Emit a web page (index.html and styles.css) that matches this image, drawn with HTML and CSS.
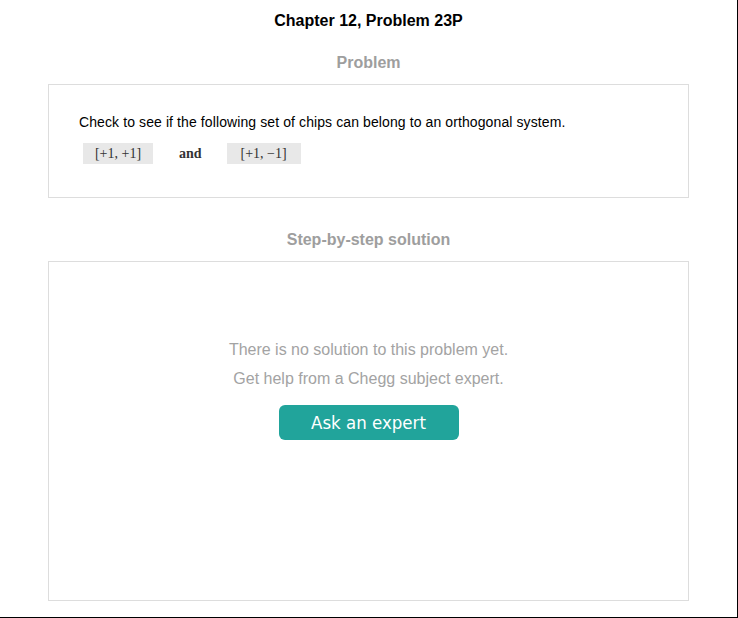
FILE: index.html
```html
<!DOCTYPE html>
<html>
<head>
<meta charset="utf-8">
<link rel="stylesheet" href="styles.css">
</head>
<body>
<div class="page">
  <div class="content">
    <h1 class="title">Chapter 12, Problem 23P</h1>
    <h2 class="section-title">Problem</h2>
    <div class="card problem-card">
      <p class="problem-text">Check to see if the following set of chips can belong to an orthogonal system.</p>
      <div class="chips">
        <span class="chip chip-a">[+1, +1]</span>
        <span class="chip-and">and</span>
        <span class="chip chip-b">[+1, &minus;1]</span>
      </div>
    </div>
    <h2 class="section-title section-gap">Step-by-step solution</h2>
    <div class="card solution-card">
      <p class="empty-text">There is no solution to this problem yet.</p>
      <p class="empty-text">Get help from a Chegg subject expert.</p>
      <button class="ask-btn">Ask an expert</button>
    </div>
  </div>
</div>
</body>
</html>
```
FILE: styles.css
```css
* { box-sizing: border-box; }
html, body { margin: 0; padding: 0; background: #fff; }
body { font-family: "Liberation Sans", Arial, sans-serif; }

.page {
  width: 738px;
  height: 618px;
  border-right: 1px solid #000;
  border-bottom: 1px solid #000;
  padding-top: 11px;
  padding-left: 48px;
}

.content {
  width: 641px;
}

.title {
  margin: 0;
  font-size: 16px;
  line-height: 20px;
  font-weight: bold;
  text-align: center;
  color: #000;
}

.section-title {
  margin: 22px 0 11px;
  font-size: 16px;
  line-height: 20px;
  font-weight: bold;
  text-align: center;
  color: #9e9e9e;
}

.section-gap { margin-top: 32px; }

.card {
  border: 1px solid #dddddd;
  background: #fff;
}

.problem-card {
  height: 114px;
  padding: 29px 30px 0;
}

.problem-text {
  margin: 0;
  font-size: 14px;
  letter-spacing: 0.1px;
  line-height: 17px;
  color: #000;
}

.chips {
  display: flex;
  align-items: center;
  margin-top: 12px;
  padding-left: 4px;
  font-family: "Liberation Serif", "Times New Roman", serif;
  font-size: 14px;
  color: #333;
}

.chip {
  display: flex;
  align-items: center;
  justify-content: center;
  height: 21px;
  background: #e8e8e8;
}

.chip-a { width: 70px; }
.chip-b { width: 74px; }

.chip-and {
  font-weight: bold;
  margin: 0 25px 0 26px;
  color: #333;
}

.solution-card {
  height: 340px;
  padding-top: 73px;
  display: flex;
  flex-direction: column;
  align-items: center;
}

.empty-text {
  margin: 0;
  font-size: 16px;
  line-height: 29px;
  color: #a3a3a3;
}

.ask-btn {
  margin-top: 12px;
  width: 180px;
  height: 35px;
  border: none;
  border-radius: 6px;
  background: #21a49b;
  color: #fff;
  font-family: "DejaVu Sans Condensed", "DejaVu Sans", sans-serif;
  font-stretch: condensed;
  font-size: 18.5px;
  padding: 0;
}
```
